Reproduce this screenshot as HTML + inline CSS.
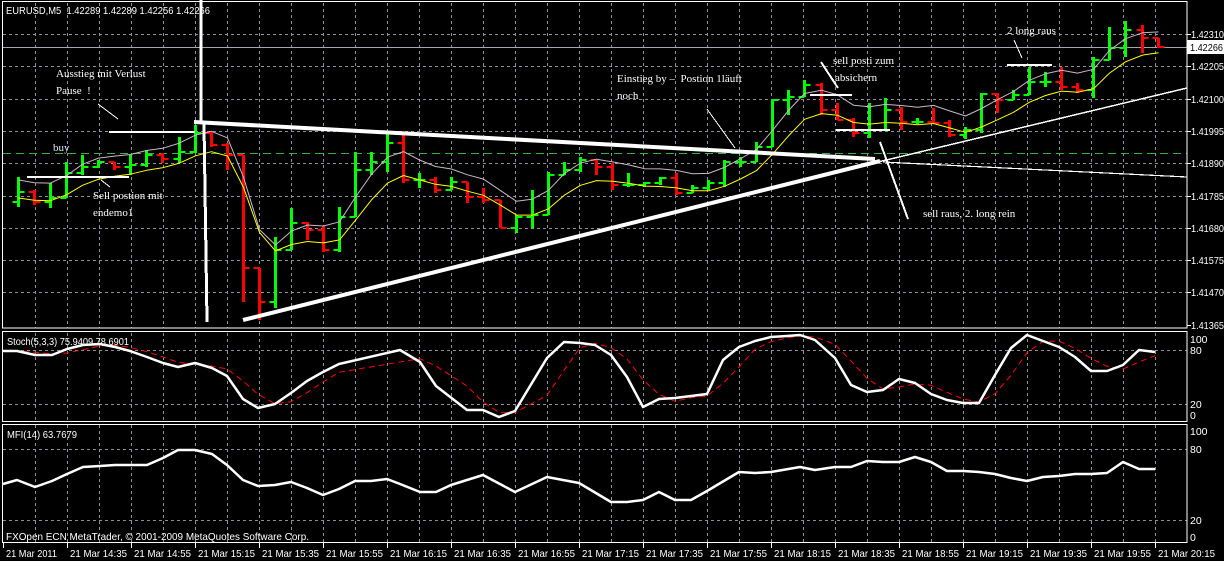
<!DOCTYPE html>
<html><head><meta charset="utf-8">
<style>
html,body{margin:0;padding:0;background:#000;width:1224px;height:561px;overflow:hidden}
svg{display:block}
</style></head>
<body>
<svg id="c" width="1224" height="561" xmlns="http://www.w3.org/2000/svg" font-family="Liberation Sans, sans-serif"></svg>
<script>
var s='';
function L(x1,y1,x2,y2,c,w,d){s+='<line x1="'+x1+'" y1="'+y1+'" x2="'+x2+'" y2="'+y2+'" stroke="'+c+'" stroke-width="'+(w||1)+'"'+(d?' stroke-dasharray="'+d+'"':'')+' shape-rendering="crispEdges"/>';}
function T(x,y,t,sz,c,f,tl){s+='<text x="'+x+'" y="'+y+'" font-size="'+sz+'" fill="'+(c||'#fff')+'"'+(f?' font-family="'+f+'"':'')+(tl?' textLength="'+tl+'" lengthAdjust="spacingAndGlyphs"':'')+'>'+t+'</text>';}
function P(pts,c,w,d){s+='<polyline points="'+pts.map(function(p){return p[0]+','+p[1]}).join(' ')+'" fill="none" stroke="'+c+'" stroke-width="'+w+'"'+(d?' stroke-dasharray="'+d+'"':'')+' stroke-linejoin="round"/>';}
var G='#8c919c';
for(var k=1;k<=36;k++){var x=3+32*k;L(x+.5,3,x+.5,328,G,1,'3,3');L(x+.5,333,x+.5,421,G,1,'3,3');L(x+.5,425,x+.5,542,G,1,'3,3');}
for(var i=0;i<9;i++){var y=Math.round(34+32.3*i)+.5;L(3,y,1187,y,G,1,'3,3');}
[350,404].forEach(function(y){L(3,y+.5,1187,y+.5,G,1,'3,3')});
[449,520].forEach(function(y){L(3,y+.5,1187,y+.5,G,1,'3,3')});
L(3,47.5,1187,47.5,'#a0a6b4',1);
L(3,153.5,1187,153.5,'#3cb043',1,'8,5');
var B=[[177,207,192],[190,205,202],[183,208,198],[162,193,173],[155,175,167],[160,168,162],[162,170,167],[155,175,165],[150,167,155],[153,163,159],[137,163,152],[125,153,133],
[132,147,145],[143,170,155],[156,302,268],[268,320,302],[237,308,250],[208,250,223],[222,240,230],[226,252,250],[207,252,217],[152,217,170],[152,175,162],[132,172,143],[133,183,180],[173,188,180],[177,193,190],[177,190,182],[182,203,197],[188,203,200],[203,228,228],[215,233,217],[190,228,215],[172,192,175],[162,175,170],[157,172,160],[162,175,167],
[163,190,185],[173,187,185],[182,187,183],[177,185,178],[173,195,193],[185,193,188],[180,190,183],[160,187,162],[157,167,162],[142,160,147],[100,143,100],[90,115,97],[80,95,85],[83,115,110],[103,120,120],[118,137,133],[103,138,130],[98,112,110],[107,130,122],[118,124,122],[108,123,123],[120,137,135],
[127,139,130],[93,133,94],[93,113,100],[90,100,95],[67,95,82],[72,87,82],[67,90,87],[83,93,90],[57,98,60],[27,60,48],[21,57,30],[25,53,38],[42,48,47]];
var prev=195,HI=[],LO=[];
for(var i=0;i<B.length;i++){var x=Math.round(18+16.05*i)+.5,b=B[i],o=prev,c=b[2];var col=c<=o?'#00ff00':'#ff0000';
 if(i==0)o=202;
 var h=Math.min(b[0],o,c),l=Math.max(b[1],o,c);
 L(x,h,x,l,col,3);L(x-6,o,x,o,col,2);L(x,c,x+6,c,col,2);prev=c;HI.push([x,h]);LO.push([x,l]);}
function ema(a,n,f){var r=[],v=a[0][1],al=2/(n+1);for(var i=0;i<a.length;i++){v=i==0?v:v+al*(a[i][1]-v);r.push([a[i][0],(v+f).toFixed(1)]);}return r;}
var mid=HI.map(function(p,i){return [p[0],(p[1]+LO[i][1])/2]});
P(ema(mid,3,-12),'#c9b6c9',1);
P(ema(mid,4,6),'#ffff00',1);
L(201,0,201,122,'#fff',3);L(204,124,207,322,'#fff',3);
s+='<line x1="194" y1="122" x2="875" y2="159" stroke="#fff" stroke-width="4"/>';
s+='<line x1="243" y1="320" x2="880" y2="161" stroke="#fff" stroke-width="4"/>';
L(878,162,1187,88,'#fff',1.5);L(883,162,1187,177,'#fff',1.2);
L(109,132,195,132,'#fff',2);L(27,177,129,177,'#fff',2);
L(98,104,118,119,'#fff',1);L(101,180,110,187,'#fff',1);
L(707,109,735,148,'#fff',1);L(821,62,838,88,'#fff',2);L(810,95,852,95,'#fff',2);L(836,130,890,130,'#fff',2);L(880,142,908,219,'#fff',2);
L(1007,65,1052,65,'#fff',2);L(1014,40,1022,58,'#fff',1);
var SF='Liberation Serif, serif';
T(56,77,'Ausstieg mit Verlust',11,'#fff',SF);T(56,94,'Pause&#160;&#160;!',11,'#fff',SF);
T(53,151,'buy',11,'#dde4ff',SF);
T(93,199,'Sell postion mit',11,'#fff',SF);T(93,216,'endemo1',11,'#fff',SF);
T(617,82,'Einstieg by &#8211;&#160; Postion 1läuft',11,'#fff',SF);T(617,99,'noch',11,'#fff',SF);
T(833,64,'sell posti zum',11,'#fff',SF);T(835,81,'absichern',11,'#fff',SF);
T(923,217,'sell raus, 2. long rein',11,'#fff',SF);T(1007,34,'2 long raus',11,'#fff',SF);
var ST=[[3,351],[17,351],[35,355],[52,355],[67,349],[83,345],[100,344],[115,347],[130,351],[147,357],[163,363],[178,367],[195,363],[212,368],[227,376],[243,399],[258,408],[275,404],[291,393],[307,381],[323,372],[339,364],[400,350],[420,362],[436,386],[467,410],[483,410],[499,417],[515,411],[547,358],[564,342],[580,343],[595,345],[611,355],[627,377],[643,407],[659,399],[675,398],[691,396],[707,394],[723,360],[739,347],[755,341],[771,337],[787,336],[800,335],[815,340],[835,358],[851,385],[867,392],[883,390],[899,379],[915,383],[931,394],[947,400],[963,403],[979,403],[995,375],[1011,348],[1027,335],[1043,341],[1059,347],[1075,357],[1091,371],[1107,371],[1123,365],[1139,350],[1155,352]];
var SG=ST.map(function(p,i){var a=ST[Math.max(0,i-1)][1],b=ST[Math.max(0,i-2)][1];return [p[0],((p[1]+a+b)/3).toFixed(1)]});
P(SG,'#ff0000',1,'6,4');P(ST,'#fff',2.5);
var MF=[[3,484],[17,480],[35,487],[52,481],[67,474],[83,467],[100,466],[115,465],[130,465],[147,465],[163,458],[178,450],[195,450],[212,454],[227,465],[243,480],[258,486],[275,485],[291,482],[307,488],[323,495],[339,489],[355,481],[371,481],[387,479],[400,484],[420,492],[436,492],[451,485],[483,475],[515,492],[547,477],[579,483],[611,502],[627,502],[643,500],[659,492],[675,500],[691,500],[707,491],[739,472],[755,473],[771,472],[800,467],[815,470],[835,467],[851,467],[867,461],[883,462],[899,462],[915,457],[931,462],[947,471],[963,471],[979,472],[995,474],[1011,478],[1027,481],[1043,477],[1059,476],[1075,474],[1091,474],[1107,473],[1123,462],[1139,469],[1155,469]];
P(MF,'#fff',2.5);
s+='<rect x="2.5" y="1.5" width="1184.5" height="326.5" fill="none" stroke="#fff" stroke-width="1"/>';
s+='<rect x="2.5" y="331.5" width="1184.5" height="90" fill="none" stroke="#fff" stroke-width="1"/>';
s+='<rect x="2.5" y="424.5" width="1184.5" height="118" fill="none" stroke="#fff" stroke-width="1"/>';
T(6,14,'EURUSD,M5&#160; 1.42289 1.42289 1.42256 1.42266',10.5,'#fff',null,204);
T(7,345,'Stoch(5,3,3) 75.9409 78.6901',10.5,'#fff',null,122);
T(7,438,'MFI(14) 63.7679',10.5,'#fff',null,70);
T(6,540,'FXOpen ECN MetaTrader, © 2001-2009 MetaQuotes Software Corp.',10.5,'#fff',null,303);
var pr=['1.42310','1.42205','1.42100','1.41995','1.41890','1.41785','1.41680','1.41575','1.41470','1.41365'];
for(var i=0;i<pr.length;i++){var y=Math.round(34+32.3*i);if(i==9)y=325;L(1187,y+.5,1191,y+.5,'#fff',1);T(1191,y+4,pr[i],10.5,'#fff',null,33);}
s+='<rect x="1187" y="40" width="37" height="14" fill="#fff"/>';T(1190,51,'1.42266',10.5,'#000',null,33);
[[339,'100'],[350,'80'],[404,'20'],[415,'0'],[431,'100'],[449,'80'],[520,'20'],[537,'0']].forEach(function(a){T(1190,a[0]+4,a[1],10.5)});
var tm=['21 Mar 2011'];var m=14*60+35;for(var k=1;k<=18;k++){var hh=Math.floor(m/60),mm=m%60;tm.push('21 Mar '+hh+':'+(mm<10?'0':'')+mm);m+=20;}
for(var k=0;k<tm.length;k++){var x=3+64*k;L(x+.5,543,x+.5,548,'#fff',1);T(x+3,557,tm[k],10.5,'#fff',null,k==0?51:57);}
document.getElementById('c').innerHTML=s;
</script>
</body></html>
